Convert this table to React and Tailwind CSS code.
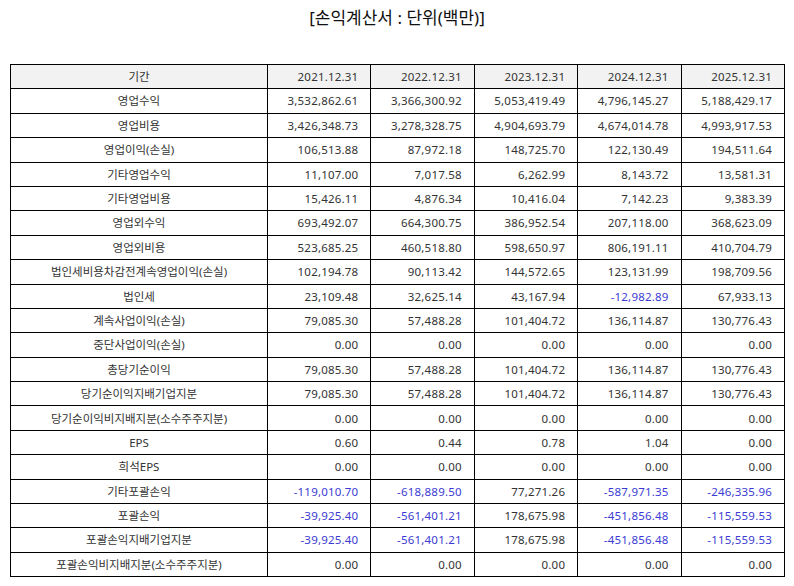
import React from "react";

const years = ["2021.12.31", "2022.12.31", "2023.12.31", "2024.12.31", "2025.12.31"];

const rows = [
  ["영업수익", "3,532,862.61", "3,366,300.92", "5,053,419.49", "4,796,145.27", "5,188,429.17"],
  ["영업비용", "3,426,348.73", "3,278,328.75", "4,904,693.79", "4,674,014.78", "4,993,917.53"],
  ["영업이익(손실)", "106,513.88", "87,972.18", "148,725.70", "122,130.49", "194,511.64"],
  ["기타영업수익", "11,107.00", "7,017.58", "6,262.99", "8,143.72", "13,581.31"],
  ["기타영업비용", "15,426.11", "4,876.34", "10,416.04", "7,142.23", "9,383.39"],
  ["영업외수익", "693,492.07", "664,300.75", "386,952.54", "207,118.00", "368,623.09"],
  ["영업외비용", "523,685.25", "460,518.80", "598,650.97", "806,191.11", "410,704.79"],
  ["법인세비용차감전계속영업이익(손실)", "102,194.78", "90,113.42", "144,572.65", "123,131.99", "198,709.56"],
  ["법인세", "23,109.48", "32,625.14", "43,167.94", "-12,982.89", "67,933.13"],
  ["계속사업이익(손실)", "79,085.30", "57,488.28", "101,404.72", "136,114.87", "130,776.43"],
  ["중단사업이익(손실)", "0.00", "0.00", "0.00", "0.00", "0.00"],
  ["총당기순이익", "79,085.30", "57,488.28", "101,404.72", "136,114.87", "130,776.43"],
  ["당기순이익지배기업지분", "79,085.30", "57,488.28", "101,404.72", "136,114.87", "130,776.43"],
  ["당기순이익비지배지분(소수주주지분)", "0.00", "0.00", "0.00", "0.00", "0.00"],
  ["EPS", "0.60", "0.44", "0.78", "1.04", "0.00"],
  ["희석EPS", "0.00", "0.00", "0.00", "0.00", "0.00"],
  ["기타포괄손익", "-119,010.70", "-618,889.50", "77,271.26", "-587,971.35", "-246,335.96"],
  ["포괄손익", "-39,925.40", "-561,401.21", "178,675.98", "-451,856.48", "-115,559.53"],
  ["포괄손익지배기업지분", "-39,925.40", "-561,401.21", "178,675.98", "-451,856.48", "-115,559.53"],
  ["포괄손익비지배지분(소수주주지분)", "0.00", "0.00", "0.00", "0.00", "0.00"],
];

export default function App() {
  return (
    <div className="w-[794px] h-[586px] bg-white text-[#333] font-['Noto_Sans','Noto_Sans_CJK_KR',sans-serif]">
      <h1 className="pt-[6px] h-[64px] text-center text-[17px] font-normal leading-[24px] text-[#111]">
        [손익계산서 : 단위(백만)]
      </h1>
      <table className="ml-[10px] w-[775px] border-collapse table-fixed">
        <colgroup>
          <col className="w-[257px]" />
          <col />
          <col />
          <col />
          <col />
          <col />
        </colgroup>
        <thead>
          <tr className="bg-[#f2f2f2]">
            <th className="h-[24.4px] p-0 border border-black font-normal text-[11.5px] text-center">기간</th>
            {years.map((y) => (
              <th key={y} className="h-[24.4px] p-0 pr-[12px] border border-black font-normal text-[11.5px] tracking-[0.2px] text-right">
                {y}
              </th>
            ))}
          </tr>
        </thead>
        <tbody>
          {rows.map((r) => (
            <tr key={r[0]}>
              <td className="h-[24.4px] p-0 border border-black text-[11.5px] text-center">{r[0]}</td>
              {r.slice(1).map((v, i) => (
                <td
                  key={i}
                  className={
                    "h-[24.4px] p-0 pr-[12px] border border-black text-[11.5px] tracking-[0.2px] text-right " +
                    (v.startsWith("-") ? "text-[#3b3bd4]" : "")
                  }
                >
                  {v}
                </td>
              ))}
            </tr>
          ))}
        </tbody>
      </table>
    </div>
  );
}
